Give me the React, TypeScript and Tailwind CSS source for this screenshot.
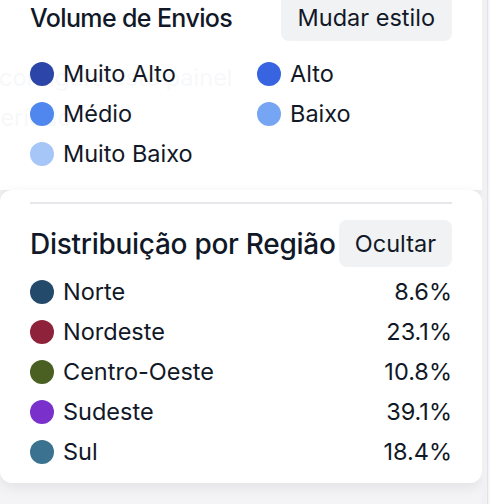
import React from "react";

const volume = [
  { label: "Muito Alto", color: "bg-[#2b45a8]" },
  { label: "Alto", color: "bg-[#3864e2]" },
  { label: "Médio", color: "bg-[#5087ef]" },
  { label: "Baixo", color: "bg-[#76a5f3]" },
  { label: "Muito Baixo", color: "bg-[#a5c6f7]" },
];

const regions = [
  { label: "Norte", color: "bg-[#244a6b]", pct: "8.6%" },
  { label: "Nordeste", color: "bg-[#8f223b]", pct: "23.1%" },
  { label: "Centro-Oeste", color: "bg-[#4a5f22]", pct: "10.8%" },
  { label: "Sudeste", color: "bg-[#7a31cc]", pct: "39.1%" },
  { label: "Sul", color: "bg-[#3a728f]", pct: "18.4%" },
];

export default function App() {
  return (
    <div
      className="relative w-[490px] h-[504px] overflow-hidden bg-[#f4f4f6] text-[#111827]"
      style={{ fontFamily: "Inter, 'Noto Sans', sans-serif" }}
    >
      {/* page text underneath the popover */}
      <div className="absolute left-0 top-0 w-[490px] h-[190px] bg-white">
        <p className="absolute left-[-1px] top-[60px] text-[23.5px] text-[#d8dadf] whitespace-nowrap">
          configure este painel
        </p>
        <p className="absolute left-[-14px] top-[100px] text-[23.5px] text-[#d8dadf] whitespace-nowrap">
          período
        </p>
      </div>

      <div className="relative flex h-full">
        <div className="w-[482px] flex flex-col">
          {/* Volume card */}
          <div className="bg-white/80 shadow-[0_4px_14px_rgba(0,0,0,0.06)] px-[30px] pb-[16px] mt-[-6px]">
            <div className="flex items-center justify-between">
              <h2 className="mt-[3px] text-[25px] font-medium tracking-[-0.025em] whitespace-nowrap">
                Volume de Envios
              </h2>
              <button className="h-[47px] px-[17px] rounded-lg bg-[#f1f2f4] text-[23.5px] text-[#111827]">
                Mudar estilo
              </button>
            </div>
            <div className="mt-[13px] grid grid-cols-[227px_1fr]">
              {volume.map((v) => (
                <div key={v.label} className="flex items-center h-[40px] gap-[9px]">
                  <span className={`w-[24px] h-[24px] rounded-full ${v.color}`} />
                  <span className="text-[23.5px]">{v.label}</span>
                </div>
              ))}
            </div>
          </div>

          {/* Region card */}
          <div className="bg-white rounded-xl shadow-[0_4px_14px_rgba(0,0,0,0.08)] px-[30px] pt-[12px] pb-[11px]">
            <div className="h-[2px] bg-[#e5e7eb]" />
            <div className="mt-[16px] flex items-center justify-between">
              <h2 className="text-[28px] font-medium tracking-[-0.01em] whitespace-nowrap">
                Distribuição por Região
              </h2>
              <button className="h-[47px] px-[16px] rounded-lg bg-[#f1f2f4] text-[23.5px] text-[#111827]">
                Ocultar
              </button>
            </div>
            <div className="mt-[5px] flex flex-col">
              {regions.map((r) => (
                <div key={r.label} className="flex items-center h-[40px]">
                  <span className={`w-[24px] h-[24px] rounded-full ${r.color}`} />
                  <span className="ml-[9px] text-[23.5px] flex-1">{r.label}</span>
                  <span className="text-[23.5px]">{r.pct}</span>
                </div>
              ))}
            </div>
          </div>
        </div>
        <div className="w-[8px] flex">
          <div className="w-[5px] bg-[#f1f1f3]" />
          <div className="w-[1px] bg-[#e3e4e8]" />
          <div className="flex-1 bg-[#f6f6f8]" />
        </div>
      </div>
    </div>
  );
}
